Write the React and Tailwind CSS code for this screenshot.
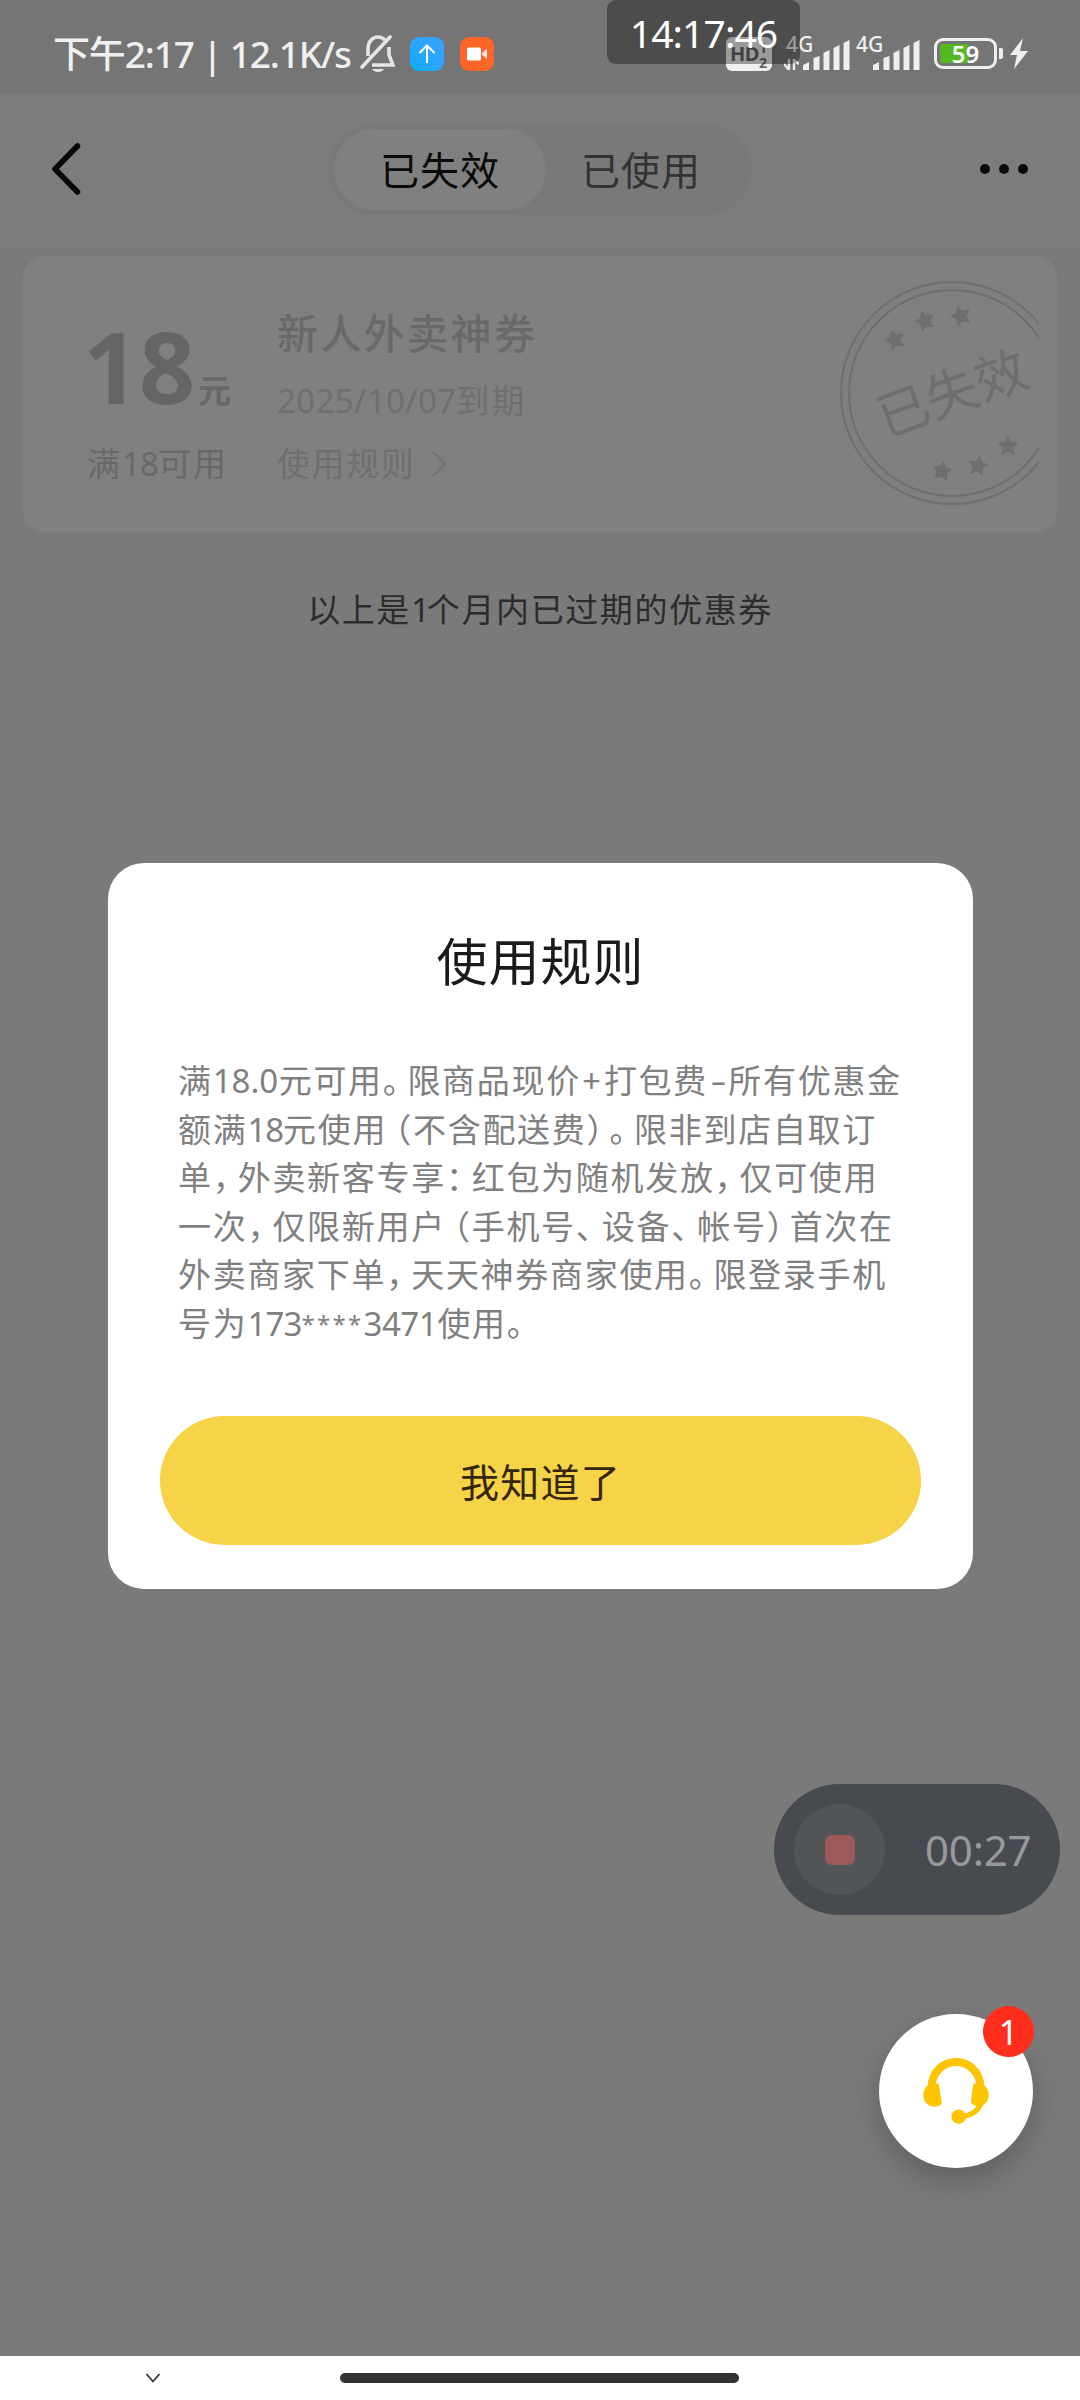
import clsx from "clsx";

const STARS = [
  [56, 61, -20],
  [86, 42, -20],
  [122, 37, -20],
  [103, 192, 10],
  [139, 187, 10],
  [169, 167, 0],
];

const RULES = [
  ["满", "18.0", "元可用", "。", "限商品现价", "+", "打包费", "-", "所有优惠金"],
  ["额满", "18", "元使用", "（", "不含配送费", "）", "。", "限非到店自取订"],
  ["单", "，", "外卖新客专享", "：", "红包为随机发放", "，", "仅可使用"],
  ["一次", "，", "仅限新用户", "（", "手机号", "、", "设备", "、", "帐号", "）", "首次在"],
  ["外卖商家下单", "，", "天天神券商家使用", "。", "限登录手机"],
  ["号为", "173", "****", "3471", "使用", "。"],
];

// punctuation and digits are set narrower than a full cell
const TOKEN_STYLE = {
  "。": "w-[24.6px]",
  "，": "w-[25px]",
  "：": "w-[25.8px]",
  "、": "w-[26px]",
  "）": "w-[23px]",
  "（": "w-[25.8px] justify-end",
  "+": "w-[23px] justify-center",
  "-": "w-[20.3px] justify-center pl-[2px] scale-x-150",
  "18": "w-[35.7px] tracking-[-1px]",
  "18.0": "w-[66px] tracking-[0px]",
  "173": "w-[54px] tracking-[-0.8px]",
  "****": "w-[62px] text-[24px] tracking-[2.3px]",
  "3471": "w-[74px] tracking-[-0.4px]",
};

function Signal() {
  return (
    <svg width="47" height="30" viewBox="0 0 47 30" fill="#efefef">
      <path d="M0 30V25L6 22V30ZM10.500 30V18L16.500 16V30ZM20.500 30V13L26.500 10V30ZM30.500 30V8L36.500 5V30ZM40.500 30V3L46.500 0V30Z" />
    </svg>
  );
}

function StatusBar() {
  return (
    <div className="relative h-[94px] shrink-0 bg-[#757575] text-[#efefef]">
      <div className="flex h-[94px] items-center pl-[53px] pt-[14px]">
        <div className="w-[307px] whitespace-nowrap text-[37px] font-medium leading-[40px] tracking-[-1.15px]">
          下午2:17 | 12.1K/s
        </div>
        <svg width="35" height="38" viewBox="0 0 35 38" fill="none" stroke="#e6e6e6" strokeWidth="3.600">
          <path d="M8 21V14C8 6 13 2 18 2C21 2 23 3 25 5M29 12V20L33 30H12" />
          <path d="M2 32L30 2" strokeLinecap="round" />
          <path d="M12 34H24C22 38 14 38 12 34Z" fill="#e6e6e6" stroke="none" />
        </svg>
        <div className="ml-[15px] flex size-[34px] items-center justify-center rounded-[9px] bg-linear-to-tr from-[#02acff] to-[#3ba0ff]">
          <svg width="18" height="20" viewBox="0 0 18 20" fill="none" stroke="#fff" strokeWidth="2">
            <path d="M9 19V2M1.500 9L9 1.500L16.500 9" />
          </svg>
        </div>
        <div className="ml-[16px] flex size-[34px] items-center justify-center rounded-[9px] bg-[#ff6429]">
          <svg width="20" height="14" viewBox="0 0 20 14" fill="#fff">
            <rect width="14" height="13" y=".5" rx="1.500" />
            <path d="M15 6L20 1.500V12L15 8Z" opacity=".8" />
          </svg>
        </div>
      </div>

      <div className="absolute left-[726px] top-[37px] flex h-[34px] w-[46px] rounded-[6px] bg-[#efefef] pl-[4px] text-[#666]">
        <span className="text-[20px] font-bold leading-[34px] tracking-[-0.5px]">HD</span>
        <span className="pt-[3px] text-[14px] font-bold leading-[15px]">
          1<br />2
        </span>
      </div>
      <div className="absolute left-[784px] top-[34px] w-[66px]">
        <div className="absolute left-[2px] top-0 text-[21px] font-medium leading-[20px]">4G</div>
        <svg className="absolute left-0 top-[25px]" width="15" height="11" viewBox="0 0 15 11" fill="none" stroke="#efefef" strokeWidth="2.400">
          <path d="M5 0V11L0 5M10 11V1L15 5" />
        </svg>
        <div className="absolute left-[19px] top-[6px]">
          <Signal />
        </div>
      </div>
      <div className="absolute left-[856px] top-[34px]">
        <div className="absolute left-0 top-0 text-[21px] font-medium leading-[20px]">4G</div>
        <div className="absolute left-[17px] top-[6px]">
          <Signal />
        </div>
      </div>
      <div className="absolute left-[934px] top-[38px] flex items-center">
        <div className="relative h-[31px] w-[63px] rounded-[9px] border-[3.5px] border-[#efefef] p-[3px]">
          <div className="h-full w-[29px] rounded-[3px] bg-[#55b81f]" />
          <div className="absolute inset-0 flex items-center justify-center text-[24px] font-semibold leading-none text-white">
            59
          </div>
        </div>
        <div className="ml-[2px] h-[11px] w-[4px] rounded-r-[2px] bg-[#efefef]" />
        <svg className="ml-[7px]" width="18" height="31" viewBox="0 0 18 31" fill="#efefef">
          <path d="M13 0L0 17H7L4 31L18 13H10Z" />
        </svg>
      </div>

      <div className="absolute left-[607px] top-0 flex h-[64px] w-[193px] items-center justify-center rounded-[9px] bg-black/35 text-[39px] leading-none tracking-[-0.9px] text-white">
        14:17:46
      </div>
    </div>
  );
}

function Header() {
  return (
    <div className="flex h-[154px] shrink-0 items-center justify-between bg-[#7c7c7c] pb-[4px] pl-[50px] pr-[52px]">
      <svg width="32" height="52" viewBox="0 0 32 52" fill="none" stroke="#080808" strokeWidth="5.500" strokeLinecap="round" strokeLinejoin="round">
        <path d="M27.500 3L5 26L27.500 49" />
      </svg>
      <div className="ml-[18px] flex h-[91px] w-[422px] items-center rounded-full bg-[#797979] p-[5px] text-[39px] tracking-[1px]">
        <div className="flex h-full w-[212px] items-center justify-center rounded-full bg-[#808080] pt-[2px] text-[#0a0a0a]">
          已失效
        </div>
        <div className="w-[190px] pt-[2px] text-center text-[#333]">已使用</div>
      </div>
      <svg width="48" height="10" viewBox="0 0 48 10" fill="#0a0a0a">
        <circle cx="5" cy="5" r="5" />
        <circle cx="24" cy="5" r="5" />
        <circle cx="43" cy="5" r="5" />
      </svg>
    </div>
  );
}

function Stamp() {
  return (
    <svg className="mr-[18px] mt-[-2px]" width="200" height="228" viewBox="0 0 200 228" fill="none" stroke="#6f6f6f" strokeWidth="2">
      <circle cx="113" cy="114" r="111" />
      <circle cx="113" cy="114" r="103" />
      {STARS.map(([x, y, r]) => (
        <path
          key={x}
          d="M0 -11L3.300 -4.500L10.500 -3.400L5.300 1.700L6.500 8.900L0 5.500L-6.500 8.900L-5.300 1.700L-10.500 -3.400L-3.300 -4.500Z"
          transform={`translate(${x} ${y}) rotate(${r})`}
          fill="#6f6f6f"
          stroke="none"
        />
      ))}
      <text
        x="0"
        y="19"
        transform="translate(113 114) rotate(-20)"
        textAnchor="middle"
        fontSize="52"
        fill="#6e6e6e"
        stroke="none"
      >
        已失效
      </text>
    </svg>
  );
}

function Coupon() {
  return (
    <div className="mx-[23px] mt-[8px] flex h-[276px] shrink-0 items-center rounded-[22px] bg-[#808080] text-[33px]">
      <div className="flex h-full w-[254px] shrink-0 flex-col pl-[64px] text-[#686868]">
        <div className="mt-[55px] flex h-[110px] items-baseline whitespace-nowrap">
          <span className="ml-[-4px] font-['Open_Sans'] text-[98px] font-bold leading-[110px] text-[#656565]">18</span>
          <span className="relative top-[-1px] ml-[3px] font-bold">元</span>
        </div>
        <div className="mt-[18px] whitespace-nowrap leading-[50px] tracking-[1.7px]">
          满<span className="tracking-[-0.6px]">18</span>可用
        </div>
      </div>
      <div className="flex h-full flex-1 flex-col text-[#6f6f6f]">
        <div className="mt-[47px] text-[41px] font-medium leading-[60px] tracking-[2.4px] text-[#696969]">新人外卖神券</div>
        <div className="mt-[14px] leading-[48px] tracking-[0.4px]">
          2025/10/07<span className="tracking-[1.6px]">到期</span>
        </div>
        <div className="mt-[15px] flex items-center leading-[48px] tracking-[1.6px]">
          使用规则
          <svg className="ml-[17px]" width="15" height="28" viewBox="0 0 15 28" fill="none" stroke="#6f6f6f" strokeWidth="2">
            <path d="M1 2L13 14L1 26" />
          </svg>
        </div>
      </div>
      <Stamp />
    </div>
  );
}

function RulesDialog() {
  return (
    <div className="absolute left-[108px] top-[863px] flex h-[726px] w-[865px] flex-col rounded-[36px] bg-white">
      <h2 className="mt-[63px] text-center text-[51px] leading-[70px] tracking-[1px] text-[#1a1a1a]">使用规则</h2>
      <div className="ml-[70px] mt-[61px] text-[33px] leading-[48.6px] tracking-[1.7px] text-[#808080]">
        {RULES.map((line, i) => (
          <div key={i} className="flex h-[48.6px] whitespace-nowrap">
            {line.map((token, j) => (
              <span key={j} className={clsx("flex shrink-0", TOKEN_STYLE[token])}>
                {token}
              </span>
            ))}
          </div>
        ))}
      </div>
      <button className="ml-[52px] mt-[67px] h-[129px] w-[761px] rounded-full bg-[#f7d347] pt-[4px] text-[39px] tracking-[1.2px] text-[#34260a]">
        我知道了
      </button>
    </div>
  );
}

function Recorder() {
  return (
    <div className="absolute left-[774px] top-[1784px] flex h-[131px] w-[286px] items-center rounded-full bg-[#474a4f] pl-[20px]">
      <div className="flex size-[91px] items-center justify-center rounded-full bg-[#515558]">
        <div className="size-[30px] rounded-[7px] bg-[#9d5858]" />
      </div>
      <span className="ml-[40px] text-[42px] leading-none tracking-[-0.2px] text-[#98999d]">00:27</span>
    </div>
  );
}

function Support() {
  return (
    <div className="absolute left-[879px] top-[2014px] flex size-[154px] items-center justify-center rounded-full bg-white shadow-[0_12px_30px_rgba(0,0,0,0.22)]">
      <svg width="66" height="66" viewBox="549 893 198 199" fill="#ffc400">
        <path d="M575 985V978A73 73 0 0 1 721 978V985" fill="none" stroke="#ffc400" strokeWidth="24" />
        <path d="M564 974Q580 966 596 971L605 1028Q604 1034 597 1037C576 1046 549 1032 549 1005Q550 986 564 974Z" />
        <path d="M732 974Q716 966 700 971L693 1026Q694 1032 700 1034L716 1041Q747 1030 747 1005Q746 986 732 974Z" />
        <path d="M724 1030Q706 1066 668 1069" fill="none" stroke="#ffc400" strokeWidth="16" />
        <circle cx="656" cy="1070" r="22" />
      </svg>
      <div className="absolute -top-[8px] -right-[1px] flex size-[51px] items-center justify-center rounded-full bg-[#ff2d1c] text-[34px] leading-none text-white">
        1
      </div>
    </div>
  );
}

export default function App() {
  return (
    <div className="relative flex h-[2400px] w-[1080px] flex-col overflow-hidden bg-[#7a7a7a] font-['Noto_Sans','Noto_Sans_CJK_SC',sans-serif]">
      <StatusBar />
      <Header />
      <Coupon />
      <div className="mt-[54px] text-center text-[33px] leading-[48px] tracking-[1.6px] text-[#2c2c2c]">
        以上是<span className="tracking-[-3px]">1</span>个月内已过期的优惠券
      </div>

      <div className="mt-auto flex h-[44px] items-center bg-white pb-[1px]">
        <svg className="ml-[145px]" width="16" height="12" viewBox="0 0 16 12" fill="none" stroke="#333" strokeWidth="1.800">
          <path d="M1.500 2L8 9.500L14.500 2" />
        </svg>
        <div className="ml-[179px] h-[10px] w-[399px] rounded-full bg-[#333]" />
      </div>

      <RulesDialog />
      <Recorder />
      <Support />
    </div>
  );
}
